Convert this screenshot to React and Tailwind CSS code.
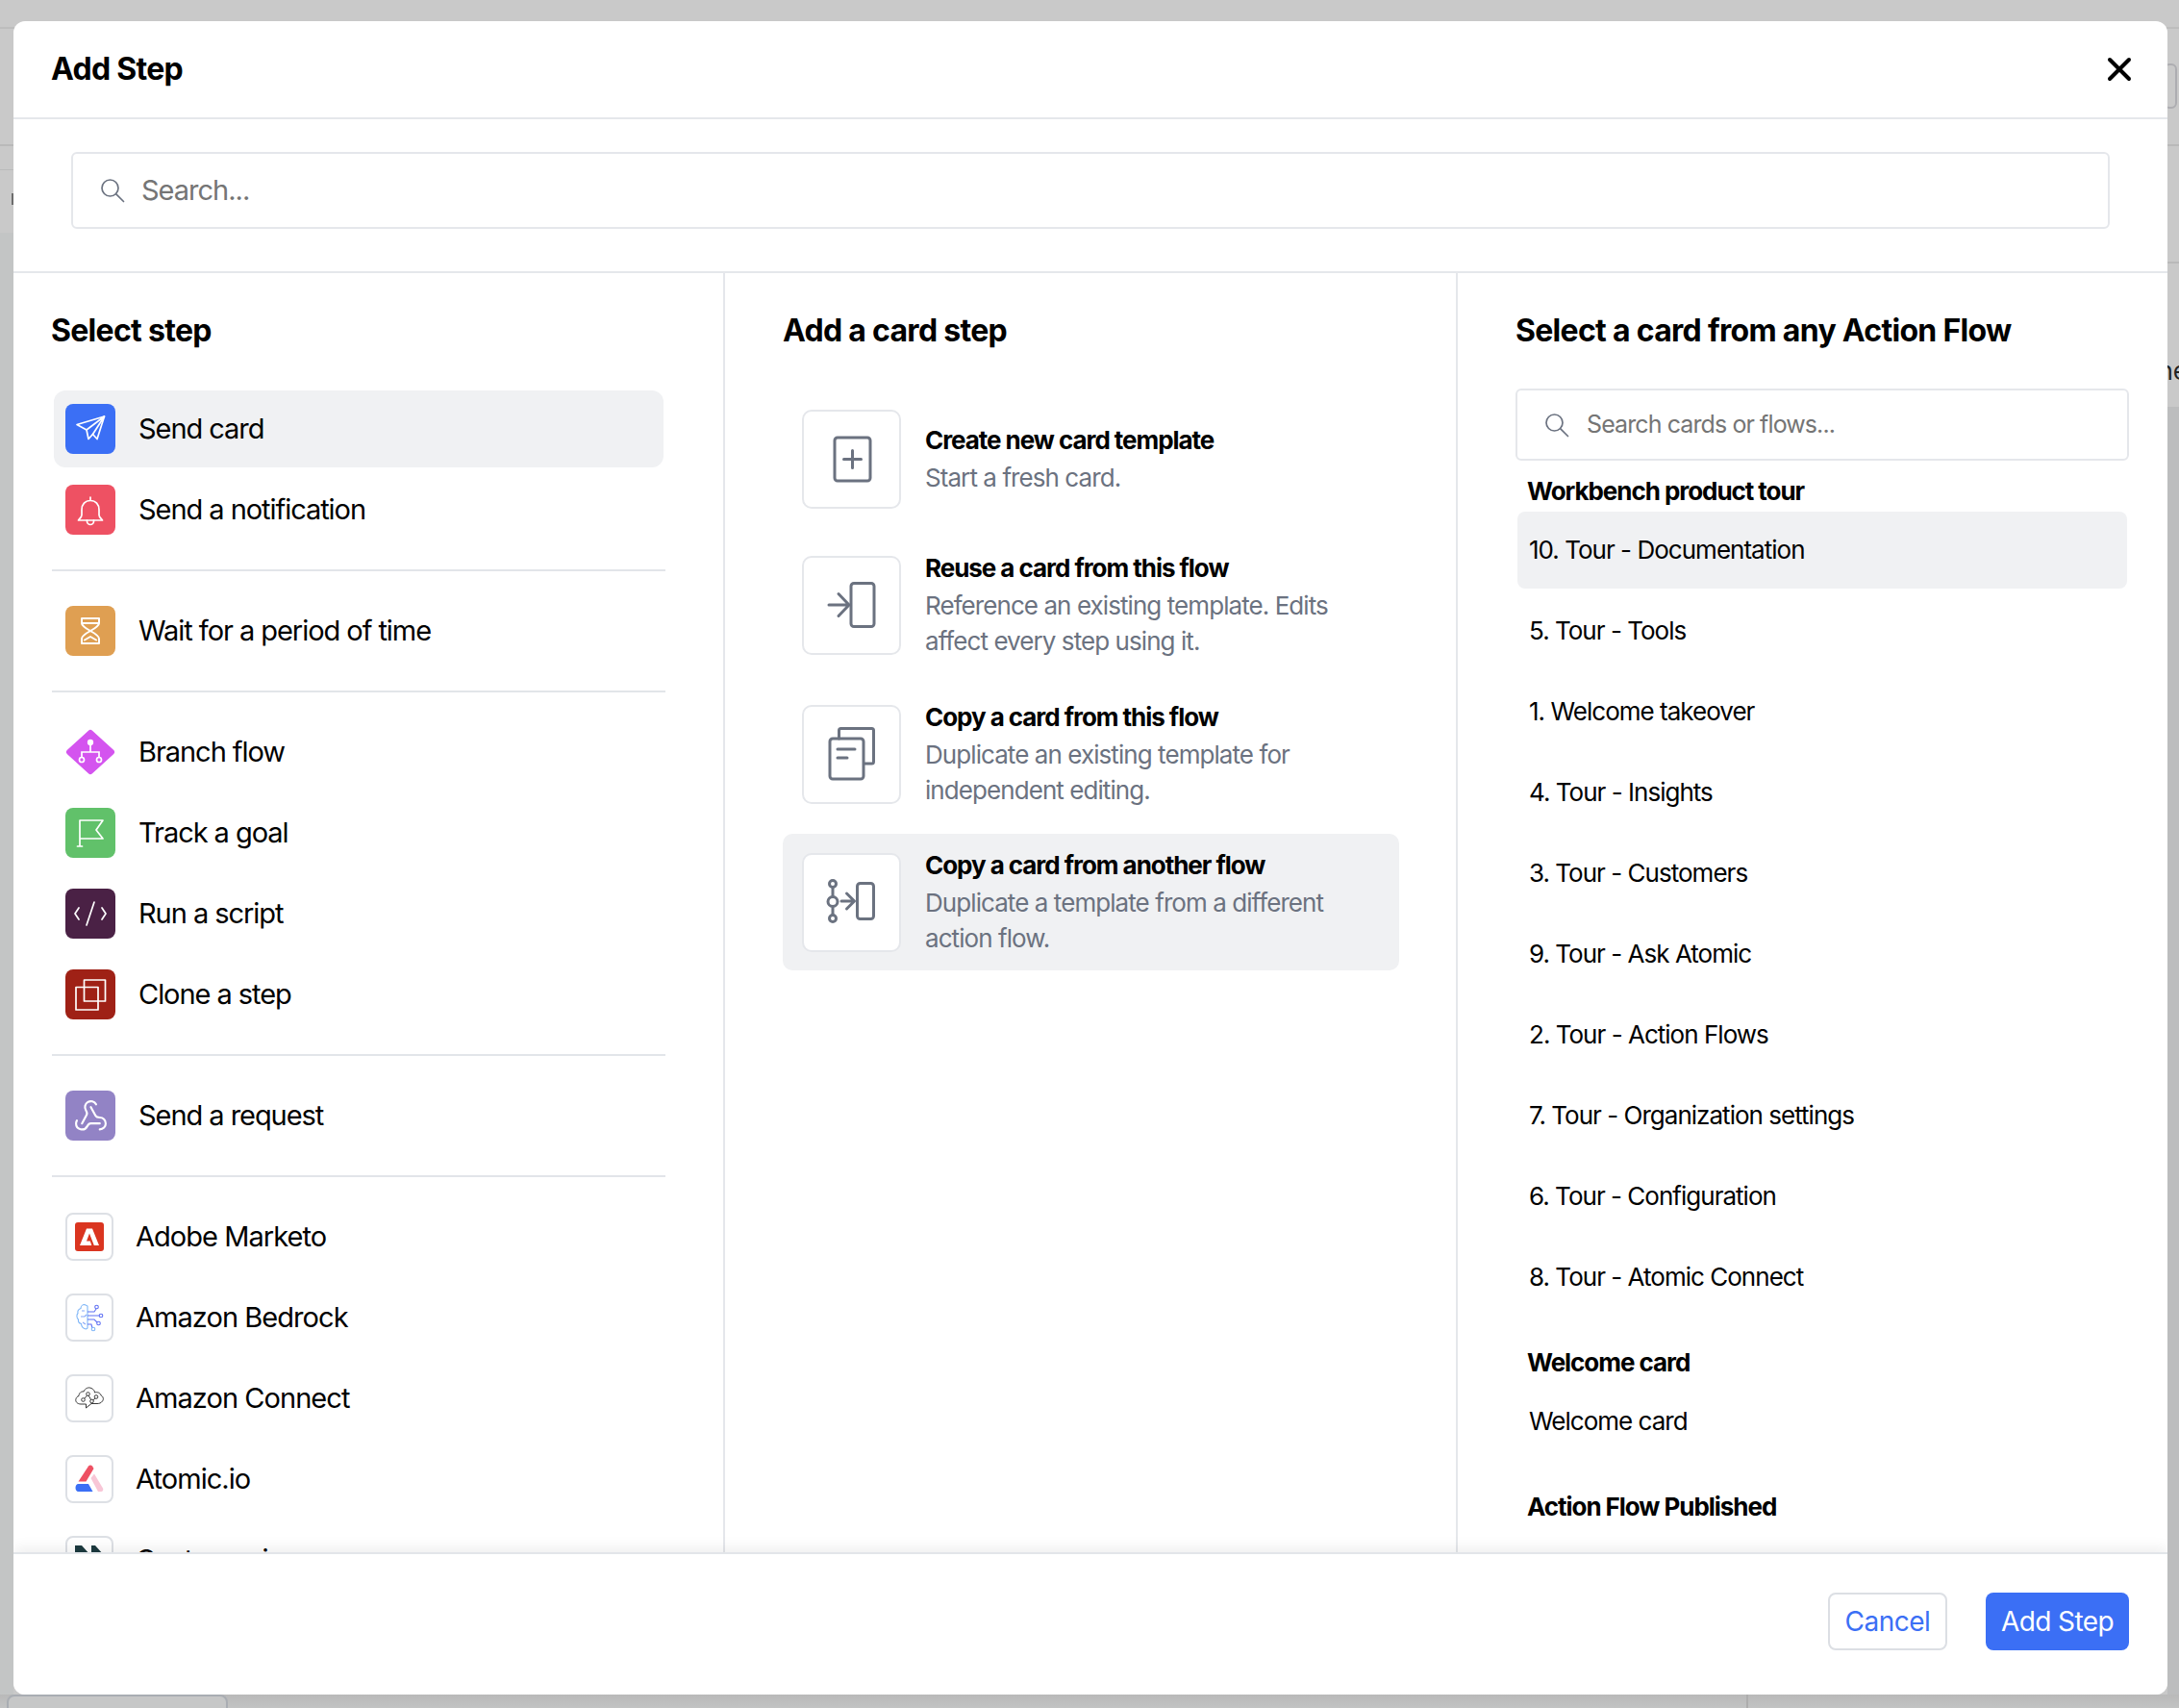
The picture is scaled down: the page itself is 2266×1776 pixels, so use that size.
import { Webhook, X } from 'lucide-react';

const stepGroups = [
  [
    { label: 'Send card', bg: 'bg-[#3b6ff5]', icon: 'send', selected: true },
    { label: 'Send a notification', bg: 'bg-[#ee5163]', icon: 'bell' },
  ],
  [{ label: 'Wait for a period of time', bg: 'bg-[#df9f52]', icon: 'wait' }],
  [
    { label: 'Branch flow', icon: 'branch' },
    { label: 'Track a goal', bg: 'bg-[#61c16a]', icon: 'flag' },
    { label: 'Run a script', bg: 'bg-[#4a2145]', icon: 'code' },
    { label: 'Clone a step', bg: 'bg-[#9f2116]', icon: 'clone' },
  ],
  [{ label: 'Send a request', bg: 'bg-[#9283c5]', icon: 'webhook' }],
];

const integrations = [
  { label: 'Adobe Marketo', icon: 'adobe' },
  { label: 'Amazon Bedrock', icon: 'bedrock' },
  { label: 'Amazon Connect', icon: 'connect' },
  { label: 'Atomic.io', icon: 'atomic' },
  { label: 'Customer.io', icon: 'customer' },
];

const cardSteps = [
  { title: 'Create new card template', desc: ['Start a fresh card.'], icon: 'create', gap: 'mb-[10px]' },
  { title: 'Reuse a card from this flow', desc: ['Reference an existing template. Edits', 'affect every step using it.'], icon: 'reuse', gap: 'mb-[13px]' },
  { title: 'Copy a card from this flow', desc: ['Duplicate an existing template for', 'independent editing.'], icon: 'copy', gap: 'mb-[12px]' },
  { title: 'Copy a card from another flow', desc: ['Duplicate a template from a different', 'action flow.'], icon: 'another', selected: true },
];

const flows = [
  {
    name: 'Workbench product tour',
    cards: [
      '10. Tour - Documentation',
      '5. Tour - Tools',
      '1. Welcome takeover',
      '4. Tour - Insights',
      '3. Tour - Customers',
      '9. Tour - Ask Atomic',
      '2. Tour - Action Flows',
      '7. Tour - Organization settings',
      '6. Tour - Configuration',
      '8. Tour - Atomic Connect',
    ],
  },
  { name: 'Welcome card', cards: ['Welcome card'] },
  { name: 'Action Flow Published', cards: [] },
];

function SearchIcon() {
  return (
    <svg width="26" height="26" viewBox="0 0 26 26" fill="none" stroke="#6b7280" strokeWidth="1.700" strokeLinecap="round" className="shrink-0">
      <circle cx="10.500" cy="10.500" r="8.500" />
      <path d="m16.800 16.800 7.700 7.700" />
    </svg>
  );
}

function StepGlyph({ name }) {
  const line = { fill: 'none', stroke: '#fff', strokeWidth: 1.7, strokeLinecap: 'round', strokeLinejoin: 'round' };
  if (name === 'send') {
    return (
      <svg width="52" height="52" viewBox="0 0 52 52" {...line}>
        <path d="M40.500 13 12 21.500l10 5.500 2 9.500 4.500-5 4.500 5z" />
        <path d="M40.500 13 22 27M40.500 13 28.500 31.500" />
      </svg>
    );
  }
  if (name === 'bell') {
    return (
      <svg width="52" height="52" viewBox="0 0 52 52" {...line}>
        <path d="M26 13v3.500M26 16.500c-5.500 0-9 4-9 9.500v5.500c0 2-2 3.500-3.500 5.500h25c-1.500-2-3.500-3.500-3.500-5.500V26c0-5.500-3.500-9.500-9-9.500z" />
        <path d="M22.500 37v1a3.500 3.500 0 0 0 7 0v-1" />
      </svg>
    );
  }
  if (name === 'wait') {
    return (
      <svg width="52" height="52" viewBox="0 0 52 52" {...line} strokeWidth="2">
        <path d="M17 13h18v5c0 3-9 8-9 8s-9-5-9-8z" />
        <path d="M26 26s9 5 9 8v5H17v-5c0-3 9-8 9-8z" />
        <path d="M17.500 18h17M20 35.500l6-3.500 6 3.500" />
      </svg>
    );
  }
  if (name === 'flag') {
    return (
      <svg width="52" height="52" viewBox="0 0 52 52" {...line}>
        <path d="M15 13v27M12.500 40h5M15 13h24l-7 10 7 9H15" />
      </svg>
    );
  }
  if (name === 'code') {
    return (
      <svg width="52" height="52" viewBox="0 0 52 52" {...line}>
        <path d="m14 20-4 6 4 6M38 20l4 6-4 6M30 14l-8 24" />
      </svg>
    );
  }
  if (name === 'clone') {
    return (
      <svg width="52" height="52" viewBox="0 0 52 52" {...line}>
        <rect x="11" y="18.500" width="23" height="23.500" />
        <rect x="19.500" y="11" width="22" height="22" />
      </svg>
    );
  }
  if (name === 'webhook') return <Webhook size={37} color="#fff" strokeWidth={1.4} />;
  return null;
}

function StepIcon({ item }) {
  if (item.icon === 'branch') {
    return (
      <div className="flex h-[52px] w-[52px] shrink-0 items-center justify-center">
        <svg width="52" height="48" viewBox="0 0 52 48">
          <path d="M26 4 48 24 26 44 4 24z" fill="#d454ef" stroke="#d454ef" strokeWidth="6" strokeLinejoin="round" />
          <g fill="none" stroke="#fff" strokeWidth="1.700">
            <circle cx="26" cy="14" r="2.300" fill="#fff" />
            <path d="M26 16v8M17 30v-6h18v6" />
            <circle cx="17" cy="32" r="2.500" />
            <circle cx="35" cy="32" r="2.500" />
          </g>
        </svg>
      </div>
    );
  }
  return (
    <div className={`flex h-[52px] w-[52px] shrink-0 items-center justify-center rounded-[8px] ${item.bg}`}>
      <StepGlyph name={item.icon} />
    </div>
  );
}

function Logo({ name }) {
  if (name === 'adobe') {
    return (
      <svg width="30" height="30" viewBox="0 0 30 30">
        <rect width="30" height="30" rx="3" fill="#da3520" />
        <path d="M12 6.500h6L25 24h-5.200L15 11.500l-3 8h3.800l1.500 4.500H5z" fill="#fff" />
      </svg>
    );
  }
  if (name === 'bedrock') {
    return (
      <svg width="30" height="30" viewBox="0 0 30 30" fill="none" strokeWidth="1.100">
        <path d="M10 1.500c-2.500 0-4 2-4 4-2.500 1-3.500 3-3 5-1.500 1.500-1.500 5 .500 6.500-.500 2.500 1 4 3 4.500 0 3 2.500 5.500 5 5.500l1.500-1V3z" stroke="#7fb6f7" />
        <path d="M7 8h3M6 14h4l2-2M8 20l3 2" stroke="#86a8f8" />
        <path d="M13 13h12M13 9h7l2-3M13 17h7l3 3M13 22h4l1 4" stroke="#5f70f3" />
        <circle cx="22.500" cy="4" r="1.800" stroke="#5f70f3" />
        <circle cx="27" cy="13" r="1.800" stroke="#5f70f3" />
        <circle cx="24.500" cy="21" r="1.800" stroke="#5f70f3" />
        <circle cx="19" cy="27" r="1.800" stroke="#7fb6f7" />
      </svg>
    );
  }
  if (name === 'connect') {
    return (
      <svg width="30" height="30" viewBox="0 0 30 30" fill="none" stroke="#222" strokeWidth="0.900" strokeLinejoin="round">
        <path d="M11.500 25v-4H6c-3.500 0-6-2.500-5-5.500.300-1.500 1.500-2.500 3-3 0-3 2.500-5 5-4.500C10.500 4.500 14 3 17 4.500c2.500 1 3.500 3 3.500 4.500 3-1 6 .500 6.500 3 2.500 1 3 4 1.500 6-1.500 2-3.500 2.500-5.500 2.500h-6z" />
        <path d="m9 16 4.500-5 4 7 4.500-4" />
        <circle cx="8.500" cy="16.500" r="1.800" fill="#fff" />
        <circle cx="13.500" cy="10.500" r="1.800" fill="#fff" />
        <circle cx="17.500" cy="18" r="1.800" fill="#fff" />
        <circle cx="22" cy="13.500" r="1.800" fill="#fff" />
      </svg>
    );
  }
  if (name === 'atomic') {
    return (
      <svg width="30" height="30" viewBox="0 0 30 30">
        <path d="M14 1.500c1-1.500 3-1.500 4 0l1.500 2.500L11.500 17.500H3.500z" fill="#ee5163" />
        <path d="M20 9.500l9 15c.800 1.500 0 3.500-2 3.500h-3L16.500 14z" fill="#f8c6d6" />
        <path d="M3.500 20h10.500l4.500 8H3.500C-.500 28-.500 20 3.500 20z" fill="#3b6ff5" />
      </svg>
    );
  }
  return (
    <svg width="30" height="30" viewBox="0 0 30 30">
      <path d="M0 0h7l9 10v20H0zM17 0h4l9 10v20H17z" fill="#1c3a3f" />
    </svg>
  );
}

function CardGlyph({ name }) {
  const line = { fill: 'none', stroke: '#6b7280', strokeWidth: 3, strokeLinecap: 'round', strokeLinejoin: 'round' };
  if (name === 'create') {
    return (
      <svg width="60" height="60" viewBox="0 0 60 60" {...line}>
        <rect x="12" y="8" width="37" height="45" rx="3" />
        <path d="M30.500 21.500v18M21.500 30.500h18" />
      </svg>
    );
  }
  if (name === 'reuse') {
    return (
      <svg width="60" height="60" viewBox="0 0 60 60" {...line}>
        <rect x="29" y="7.500" width="24" height="45" rx="3" />
        <path d="M6 30h20.500M16 18.500 27 30 16 41.500" />
      </svg>
    );
  }
  if (name === 'copy') {
    return (
      <svg width="60" height="60" viewBox="0 0 60 60" {...line}>
        <path d="M16.500 14V5.500a2 2 0 0 1 2-2h32a2 2 0 0 1 2 2V38a2 2 0 0 1-2 2H43" />
        <rect x="7" y="14" width="35" height="42" rx="3" />
        <path d="M15 25h18M15 34h10" />
      </svg>
    );
  }
  return (
    <svg width="60" height="60" viewBox="0 0 60 60" {...line}>
      <rect x="35.500" y="10.500" width="17" height="37" rx="3" />
      <path d="M10 15v9M10 36v7M19 29h13M24.500 21l8 8-8 8" />
      <circle cx="10" cy="11" r="3.500" />
      <circle cx="10" cy="29.500" r="5" />
      <circle cx="10" cy="47" r="3.500" />
    </svg>
  );
}

// the dimmed page that shows around the modal
function Backdrop() {
  return (
    <>
      <div className="absolute inset-x-0 top-[28px] h-[2px] bg-[#bdbdbd]" />
      <div className="absolute inset-x-0 top-[150px] h-[2px] bg-[#b9b9b9]" />
      <div className="absolute left-0 top-[176px] h-[1px] w-[14px] bg-[#b9bbbb]" />
      <div className="absolute right-0 top-[272px] h-[2px] w-[14px] bg-[#b9b9b9]" />
      <div className="absolute left-0 top-[242px] h-[1534px] w-[14px] bg-[#c3c5c5]" />
      <div className="absolute right-0 top-[423px] h-[1353px] w-[12px] bg-[#bcbdbe]" />
      <div className="absolute left-[12px] top-[201px] h-[12px] w-[2px] bg-[#6c6c6c]" />
      <div className="absolute right-[2px] top-[66px] h-[47px] w-[14px] rounded-[6px] border-2 border-[#adadb1]" />
      <div className="absolute right-[-9px] top-[368px] text-[26px] leading-[36px] text-[#222]">ne</div>
      <div className="absolute inset-x-0 bottom-0 h-[14px] bg-gradient-to-b from-[#b9b9b9] to-[#c2c3c3]" />
      <div className="absolute bottom-0 left-[1816px] h-[14px] w-[2px] bg-[#adadad]" />
      <div className="absolute left-[7px] top-[1762px] h-[40px] w-[230px] rounded-t-[8px] border-2 border-[#a9adb3] bg-[#c6c7c7] pl-[18px] pt-[6px] text-[24px] text-[#8593bd]">
        Test Action Flow
      </div>
    </>
  );
}

export default function App() {
  return (
    <div className="relative flex h-[1776px] w-[2266px] overflow-hidden bg-[#c9c9c9] pb-[14px] pl-[14px] pr-[12px] pt-[22px] font-['Inter',sans-serif] text-black">
      <Backdrop />
      <div className="relative flex w-full flex-col overflow-hidden rounded-[12px] bg-white">
        <header className="flex h-[102px] shrink-0 items-center justify-between border-b-2 border-[#e5e7eb] pl-[39px] pr-[30px]">
          <h1 className="text-[32px] font-[650] tracking-[-0.7px]">Add Step</h1>
          <X size={40} strokeWidth={2.4} />
        </header>

        <div className="shrink-0 border-b-2 border-[#e5e7eb] px-[60px] pb-[44px] pt-[34px]">
          <div className="flex h-[80px] items-center rounded-[6px] border-2 border-[#e5e7eb] pl-[28px]">
            <SearchIcon />
            <span className="ml-[17px] text-[29px] tracking-[-1px] text-[#757575]">Search...</span>
          </div>
        </div>

        <div className="flex min-h-0 flex-1">
          {/* Select step */}
          <section className="w-[740px] shrink-0 overflow-hidden border-r-2 border-[#e5e7eb] pl-[40px] pr-[60px] pt-[36px]">
            <h2 className="-ml-[1px] mb-[36px] text-[32px] font-[650] leading-[48px] tracking-[-0.7px]">Select step</h2>
            {stepGroups.map((group) => (
              <div key={group[0].label} className="mb-[20px] border-b-2 border-[#e2e5e9] pb-[20px]">
                {group.map((item) => (
                  <div key={item.label} className="h-[84px] px-[2px] py-[2px]">
                    <div className={`flex h-[80px] items-center gap-[24px] rounded-[12px] pl-[12px] ${item.selected ? 'bg-[#f0f1f3]' : ''}`}>
                      <StepIcon item={item} />
                      <span className="text-[29px] tracking-[-1.05px]">{item.label}</span>
                    </div>
                  </div>
                ))}
              </div>
            ))}
            {integrations.map((item) => (
              <div key={item.label} className="flex h-[84px] items-center gap-[23px] pl-[14px]">
                <div className="flex h-[50px] w-[50px] shrink-0 items-center justify-center rounded-[8px] border-2 border-[#dde0e5]">
                  <Logo name={item.icon} />
                </div>
                <span className="text-[29px] tracking-[-0.95px]">{item.label}</span>
              </div>
            ))}
          </section>

          {/* Add a card step */}
          <section className="w-[762px] shrink-0 overflow-hidden border-r-2 border-[#e5e7eb] pl-[60px] pr-[59px] pt-[36px]">
            <h2 className="mb-[38px] text-[32px] font-[650] leading-[48px] tracking-[-0.7px]">Add a card step</h2>
            {cardSteps.map((step) => (
              <div key={step.title} className={`flex h-[142px] items-center gap-[25px] rounded-[10px] pl-[20px] ${step.gap || ''} ${step.selected ? 'bg-[#f0f1f3]' : ''}`}>
                <div className="flex h-[103px] w-[103px] shrink-0 items-center justify-center rounded-[10px] border-2 border-[#e5e7eb] bg-white">
                  <CardGlyph name={step.icon} />
                </div>
                <div>
                  <div className="mb-[2px] text-[26px] font-[650] leading-[36px] tracking-[-1.05px]">{step.title}</div>
                  {step.desc.map((d) => (
                    <div key={d} className="text-[26px] leading-[37px] tracking-[-0.93px] text-[#6b7280]">{d}</div>
                  ))}
                </div>
              </div>
            ))}
          </section>

          {/* Select a card */}
          <section className="min-w-0 flex-1 overflow-hidden pl-[60px] pr-[40px] pt-[36px]">
            <h2 className="mb-[36px] text-[32px] font-[650] leading-[48px] tracking-[-0.7px]">Select a card from any Action Flow</h2>
            <div className="flex h-[75px] items-center rounded-[6px] border-2 border-[#e5e7eb] pl-[28px]">
              <SearchIcon />
              <span className="ml-[18px] text-[25px] tracking-[-0.9px] text-[#757575]">Search cards or flows...</span>
            </div>
            {flows.map((flow, i) => (
              <div key={flow.name} className={i === 0 ? 'mt-[14px]' : 'mt-[29px]'}>
                <div className="h-[37px] pl-[12px] text-[26px] font-[650] leading-[36px] tracking-[-1.05px]">{flow.name}</div>
                {flow.cards.map((card, j) => (
                  <div key={card} className="h-[84px] px-[2px] py-[2px]">
                    <div className={`flex h-[80px] items-center rounded-[8px] pb-[1px] pl-[12px] text-[26px] tracking-[-0.98px] ${i === 0 && j === 0 ? 'bg-[#f0f1f3]' : ''}`}>
                      {card}
                    </div>
                  </div>
                ))}
              </div>
            ))}
          </section>
        </div>

        <footer className="relative flex h-[148px] shrink-0 items-start justify-end gap-[40px] border-t-2 border-[#e2e5e9] bg-white pr-[40px] pt-[40px] shadow-[0_-4px_14px_rgba(0,0,0,0.07)]">
          <button className="h-[60px] w-[124px] rounded-[8px] border-2 border-[#dcdfe4] text-[28px] tracking-[-0.5px] text-[#3b6ff5]">Cancel</button>
          <button className="h-[60px] w-[149px] rounded-[8px] bg-[#3b6ff5] text-[28px] tracking-[-0.6px] text-white">Add Step</button>
        </footer>
      </div>
    </div>
  );
}
